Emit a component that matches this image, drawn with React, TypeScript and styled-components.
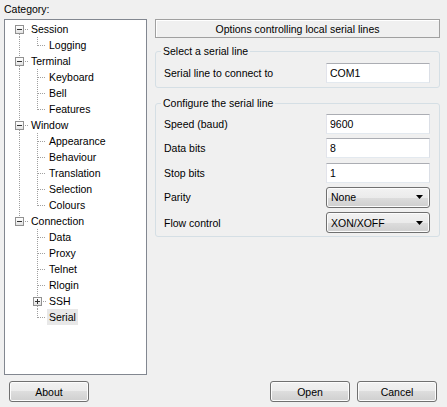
import React from 'react';
import styled, { createGlobalStyle } from 'styled-components';

const GlobalStyle = createGlobalStyle`
  html, body {
    margin: 0;
    padding: 0;
    background: #f0f0f0;
  }
  body {
    font-family: "Liberation Sans", Arial, sans-serif;
    font-size: 10.5px;
    color: #000;
  }
`;

const Window = styled.div`
  width: 447px;
  height: 407px;
  display: flex;
  flex-direction: column;
  background: #f0f0f0;
  overflow: hidden;
`;

const Main = styled.div`
  display: flex;
  height: 375px;
`;

const LeftPane = styled.div`
  width: 143px;
  margin-left: 4px;
  display: flex;
  flex-direction: column;
`;

const CategoryLabel = styled.div`
  height: 19px;
  box-sizing: border-box;
  padding-top: 3px;
  line-height: 13px;
`;

const TreeBox = styled.div`
  flex: 1;
  box-sizing: border-box;
  border: 1px solid #828790;
  background: #fff;
  padding: 1px 0 0 5px;
`;

const TreeRow = styled.div`
  display: flex;
  height: 16px;
`;

const Guide = styled.div`
  position: relative;
  width: 18px;
  flex: none;
`;

const dots = '#a0a0a0';

const VLine = styled.span<{ $from: number; $to: number }>`
  position: absolute;
  left: 9px;
  width: 1px;
  top: ${(p) => p.$from}px;
  height: ${(p) => p.$to - p.$from}px;
  background: repeating-linear-gradient(to bottom, ${dots} 0 1px, transparent 1px 2px);
`;

const HLine = styled.span<{ $from: number }>`
  position: absolute;
  top: 8px;
  height: 1px;
  left: ${(p) => p.$from}px;
  right: 0;
  background: repeating-linear-gradient(to right, ${dots} 0 1px, transparent 1px 2px);
`;

const Expander = styled.span`
  position: absolute;
  left: 5px;
  top: 4px;
  width: 9px;
  height: 9px;
  box-sizing: border-box;
  border: 1px solid #919191;
  background: linear-gradient(#ffffff, #e2e2e2);
  display: flex;
  align-items: center;
  justify-content: center;
`;

const Label = styled.span<{ $selected?: boolean }>`
  margin-left: 1px;
  padding: 0 2px;
  line-height: 16px;
  white-space: nowrap;
  background: ${(p) => (p.$selected ? '#e8e8e8' : 'transparent')};
`;

const ExpanderGlyph = ({ plus }: { plus?: boolean }) => (
  <svg width="7" height="7" viewBox="0 0 7 7">
    <rect x="1" y="3" width="5" height="1" fill="#333" />
    {plus && <rect x="3" y="1" width="1" height="5" fill="#333" />}
  </svg>
);

type Node = {
  label: string;
  children?: { label: string; plus?: boolean; selected?: boolean }[];
};

const tree: Node[] = [
  { label: 'Session', children: [{ label: 'Logging' }] },
  { label: 'Terminal', children: [{ label: 'Keyboard' }, { label: 'Bell' }, { label: 'Features' }] },
  {
    label: 'Window',
    children: [
      { label: 'Appearance' },
      { label: 'Behaviour' },
      { label: 'Translation' },
      { label: 'Selection' },
      { label: 'Colours' },
    ],
  },
  {
    label: 'Connection',
    children: [
      { label: 'Data' },
      { label: 'Proxy' },
      { label: 'Telnet' },
      { label: 'Rlogin' },
      { label: 'SSH', plus: true },
      { label: 'Serial', selected: true },
    ],
  },
];

const Tree = () => (
  <TreeBox>
    {tree.map((node, i) => {
      const first = i === 0;
      const last = i === tree.length - 1;
      const kids = node.children ?? [];
      return (
        <React.Fragment key={node.label}>
          <TreeRow>
            <Guide>
              {!first && <VLine $from={0} $to={4} />}
              {!last && <VLine $from={13} $to={16} />}
              <Expander>
                <ExpanderGlyph />
              </Expander>
              <HLine $from={15} />
            </Guide>
            <Label>{node.label}</Label>
          </TreeRow>
          {kids.map((kid, k) => {
            const lastKid = k === kids.length - 1;
            return (
              <TreeRow key={kid.label}>
                <Guide>{!last && <VLine $from={0} $to={16} />}</Guide>
                <Guide>
                  {kid.plus ? (
                    <>
                      <VLine $from={0} $to={4} />
                      <VLine $from={13} $to={16} />
                      <Expander>
                        <ExpanderGlyph plus />
                      </Expander>
                      <HLine $from={15} />
                    </>
                  ) : (
                    <>
                      <VLine $from={0} $to={lastKid ? 9 : 16} />
                      <HLine $from={10} />
                    </>
                  )}
                </Guide>
                <Label $selected={kid.selected}>{kid.label}</Label>
              </TreeRow>
            );
          })}
        </React.Fragment>
      );
    })}
  </TreeBox>
);

const RightPane = styled.div`
  margin-left: 8px;
  width: 285px;
  padding-top: 19px;
  display: flex;
  flex-direction: column;
`;

const PanelTitle = styled.div`
  height: 19px;
  box-sizing: border-box;
  border: 1px solid #a0a0a0;
  box-shadow: inset 1px 1px 0 #fff;
  display: flex;
  align-items: center;
  justify-content: center;
`;

const Group = styled.fieldset<{ $top: number; $padTop: number; $padBottom: number }>`
  margin: ${(p) => p.$top}px 0 0 0;
  padding: ${(p) => p.$padTop}px 9px ${(p) => p.$padBottom}px 8px;
  border: 1px solid #d5dfe5;
  border-radius: 3px;
  min-width: 0;
  display: flex;
  flex-direction: column;
  gap: 4.25px;
`;

const Legend = styled.legend`
  padding: 0 2px;
  margin-left: -3px;
  line-height: 13px;
`;

const FieldRow = styled.div<{ $tall?: boolean }>`
  display: flex;
  align-items: center;
  justify-content: space-between;
  height: ${(p) => (p.$tall ? 21 : 20)}px;
`;

const TextBox = styled.input`
  width: 104px;
  height: 20px;
  box-sizing: border-box;
  margin: 0;
  padding: 0 3px;
  font: inherit;
  color: #000;
  background: #fff;
  border: 1px solid;
  border-color: #abadb3 #dbdfe6 #e3e9ef #e2e3ea;
  outline: none;
`;

const winButton = `
  border: 1px solid #707070;
  border-radius: 3px;
  background: linear-gradient(#f2f2f2 0%, #ebebeb 50%, #dddddd 50%, #cfcfcf 100%);
  box-shadow: inset 0 0 0 1px #fcfcfc;
`;

const ComboBox = styled.div`
  width: 104px;
  height: 21px;
  box-sizing: border-box;
  ${winButton}
  display: flex;
  align-items: center;
  justify-content: space-between;
  padding: 0 6px 0 4px;
`;

const ComboArrow = () => (
  <svg width="7" height="4" viewBox="0 0 7 4">
    <path d="M0 0H7L3.5 4Z" fill="#000" />
  </svg>
);

const Footer = styled.div`
  display: flex;
  align-items: flex-start;
  padding: 6px 10px 0 9px;
  gap: 7px;
`;

const Button = styled.button`
  width: 80px;
  height: 21px;
  box-sizing: border-box;
  margin: 0;
  padding: 0;
  font: inherit;
  color: #000;
  ${winButton}
`;

const Spacer = styled.div`
  flex: 1;
`;

const Field = ({ label, value }: { label: string; value: string }) => (
  <FieldRow>
    <span>{label}</span>
    <TextBox readOnly value={value} />
  </FieldRow>
);

const Choice = ({ label, value }: { label: string; value: string }) => (
  <FieldRow $tall>
    <span>{label}</span>
    <ComboBox>
      <span>{value}</span>
      <ComboArrow />
    </ComboBox>
  </FieldRow>
);

export default function App() {
  return (
    <Window>
      <GlobalStyle />
      <Main>
        <LeftPane>
          <CategoryLabel>Category:</CategoryLabel>
          <Tree />
        </LeftPane>
        <RightPane>
          <PanelTitle>Options controlling local serial lines</PanelTitle>
          <Group $top={7} $padTop={5} $padBottom={4}>
            <Legend>Select a serial line</Legend>
            <Field label="Serial line to connect to" value="COM1" />
          </Group>
          <Group $top={9} $padTop={4} $padBottom={3}>
            <Legend>Configure the serial line</Legend>
            <Field label="Speed (baud)" value="9600" />
            <Field label="Data bits" value="8" />
            <Field label="Stop bits" value="1" />
            <Choice label="Parity" value="None" />
            <Choice label="Flow control" value="XON/XOFF" />
          </Group>
        </RightPane>
      </Main>
      <Footer>
        <Button>About</Button>
        <Spacer />
        <Button>Open</Button>
        <Button>Cancel</Button>
      </Footer>
    </Window>
  );
}
